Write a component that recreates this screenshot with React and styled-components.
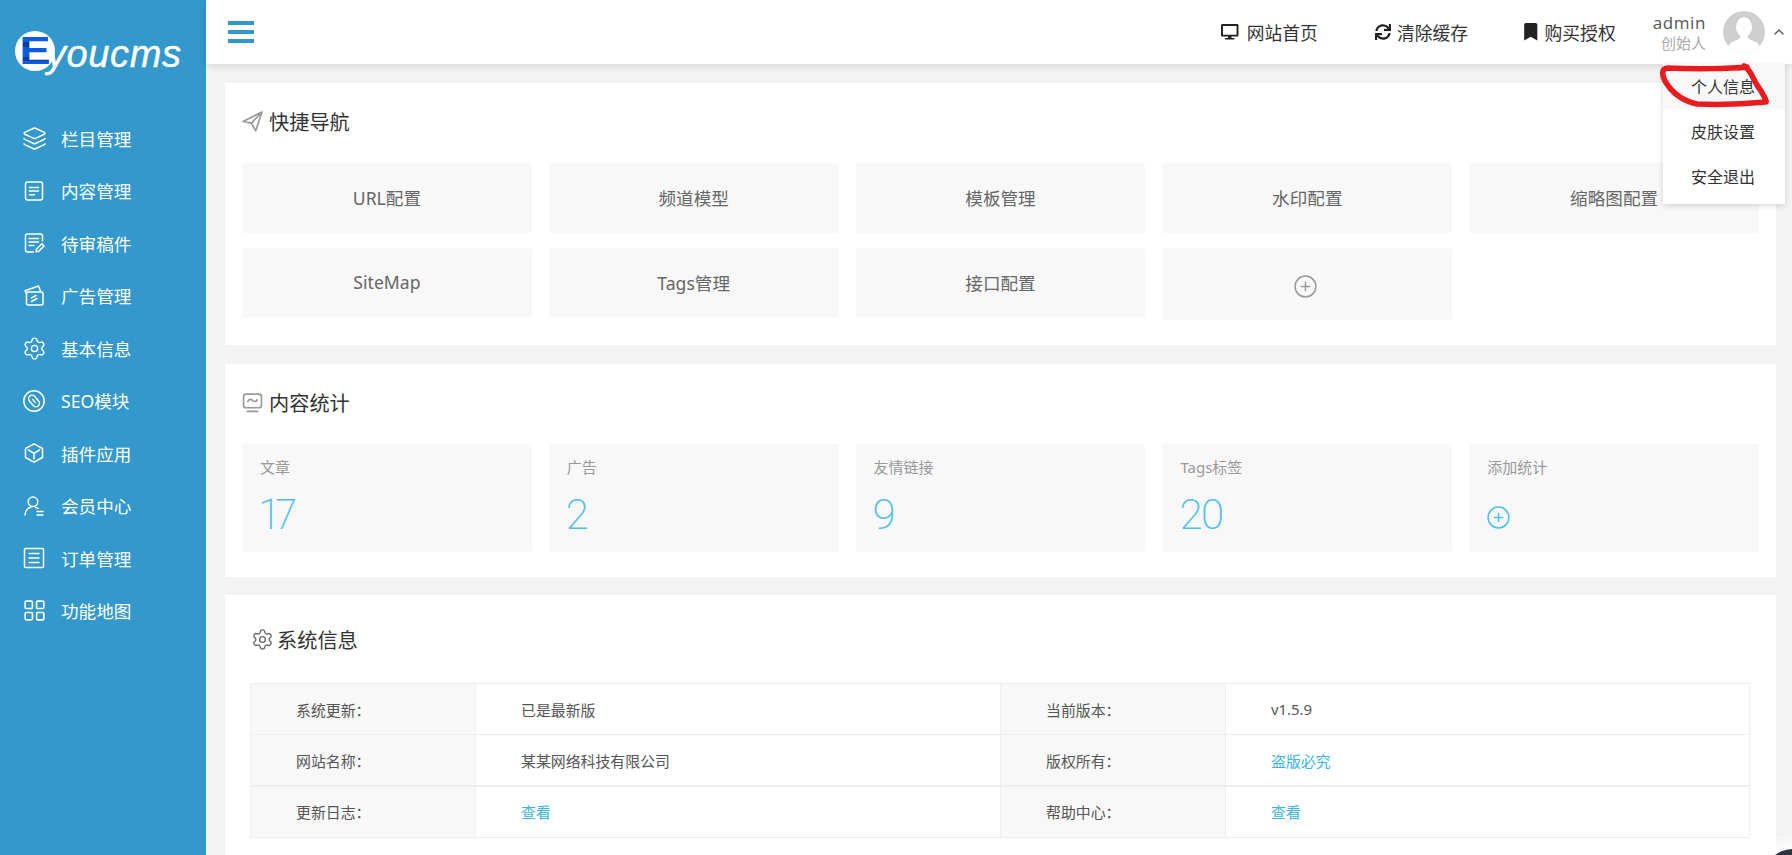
import React from 'react';
import styled, { createGlobalStyle } from 'styled-components';
import { Layers, Settings, LayoutGrid, CirclePlus, ChevronUp } from 'lucide-react';
import { FaDesktop, FaSync, FaBookmark } from 'react-icons/fa';

const GlobalStyle = createGlobalStyle`
  html, body {
    margin: 0;
    padding: 0;
    height: 100%;
    overflow: hidden;
    background: #f3f3f3;
  }
  body {
    font-family: "Noto Sans", "Noto Sans CJK SC", sans-serif;
  }
  * {
    box-sizing: border-box;
  }
`;

const Page = styled.div`
  position: relative;
  display: flex;
  width: 1792px;
  height: 855px;
  overflow: hidden;
`;

const Sidebar = styled.aside`
  flex: 0 0 206px;
  background: #3398cc;
  color: #fff;
`;

const Logo = styled.div`
  display: flex;
  align-items: center;
  height: 112px;
  padding: 0 0 11px 15px;
`;

const LogoCircle = styled.div`
  display: flex;
  flex: 0 0 40px;
  align-items: center;
  justify-content: center;
  width: 40px;
  height: 40px;
  border-radius: 50%;
  background: #fff;
`;

const LogoE = styled.span`
  display: block;
  font-family: "Liberation Sans", sans-serif;
  font-size: 39px;
  font-weight: 700;
  line-height: 1;
  color: transparent;
  background: linear-gradient(#0a5ce6 0 28%, #06409f 28% 40%, #0a5ce6 40% 66%, #06409f 66% 78%, #0a5ce6 78%);
  -webkit-background-clip: text;
  background-clip: text;
  transform: scaleX(1.2);
`;

const LogoText = styled.span`
  margin: 6px 0 0 -8px;
  font-family: "Liberation Sans", sans-serif;
  font-size: 38px;
  font-style: italic;
  line-height: 1;
  letter-spacing: 0.6px;
  -webkit-text-stroke: 0.4px #fff;
`;

const NavItem = styled.a`
  display: flex;
  align-items: center;
  gap: 16px;
  height: 52.5px;
  padding-left: 23px;
  font-size: 17.6px;
  color: #fff;
`;

const IconSlot = styled.span`
  display: flex;
  flex: 0 0 22px;
  align-items: center;
  justify-content: center;
  width: 22px;
  svg {
    flex-shrink: 0;
  }
`;

const NavIcon = styled.svg`
  flex: 0 0 22px;
  width: 22px;
  height: 22px;
  fill: none;
  stroke: currentColor;
  stroke-width: 1.5;
  stroke-linecap: round;
  stroke-linejoin: round;
`;

const Main = styled.div`
  flex: 1;
  min-width: 0;
`;

const Topbar = styled.header`
  position: relative;
  z-index: 2;
  display: flex;
  align-items: center;
  justify-content: space-between;
  height: 64px;
  padding: 0 5px 0 22px;
  background: #fff;
  box-shadow: 0 2px 8px rgba(0, 0, 0, 0.12);
`;

const Burger = styled.div`
  display: flex;
  flex-direction: column;
  gap: 5px;
  width: 26px;
  span {
    height: 4px;
    background: #3398cc;
  }
`;

const TopRight = styled.div`
  display: flex;
  align-items: center;
`;

const TopLink = styled.a`
  display: flex;
  align-items: center;
  gap: ${(p) => p.$gap}px;
  margin-right: ${(p) => p.$space}px;
  font-size: 17.8px;
  color: #333;
  svg {
    color: #222;
  }
`;

const UserName = styled.div`
  margin-right: 17px;
  text-align: right;
`;

const Admin = styled.div`
  font-family: "Open Sans", sans-serif;
  font-size: 17px;
  line-height: 22px;
  letter-spacing: 0.6px;
  color: #555;
`;

const Role = styled.div`
  font-size: 15px;
  line-height: 18px;
  color: #aaa;
`;

const Avatar = styled.svg`
  flex: 0 0 42px;
  width: 42px;
  height: 42px;
  margin-right: 6px;
`;

const Dropdown = styled.ul`
  position: absolute;
  top: 64px;
  right: 7px;
  width: 122px;
  margin: 0;
  padding: 0;
  list-style: none;
  background: #fff;
  box-shadow: 0 2px 6px rgba(0, 0, 0, 0.15);
`;

const DropItem = styled.li`
  height: ${(p) => (p.$last ? 50 : 45)}px;
  padding: 11px 0 0 28px;
  font-size: 16px;
  line-height: 24px;
  color: #333;
  background: ${(p) => (p.$first ? '#f8f8f8' : '#fff')};
`;

const Marker = styled.svg`
  position: absolute;
  top: 55px;
  left: 1650px;
  z-index: 3;
  width: 142px;
  height: 70px;
  fill: none;
  stroke: #e81c1f;
  stroke-width: 5.5;
  stroke-linecap: round;
  stroke-linejoin: round;
`;

const CornerBadge = styled.div`
  position: absolute;
  top: 849px;
  left: 1763px;
  z-index: 3;
  width: 90px;
  height: 60px;
  border-radius: 30px 0 0 0;
  background: #2d3340;
  box-shadow: 0 0 14px 8px rgba(255, 255, 255, 0.9);
`;

const Content = styled.main`
  display: flex;
  flex-direction: column;
  gap: 18.5px;
  padding: 19px 16px 0 19px;
`;

const Card = styled.section`
  padding: 0 17px 25px;
  background: #fff;
`;

const CardHead = styled.h2`
  display: flex;
  align-items: center;
  gap: 6px;
  height: 80px;
  margin: 0;
  padding-bottom: 3px;
  font-size: 20.2px;
  font-weight: 400;
  color: #333;
  svg {
    flex: 0 0 21px;
    width: 21px;
    height: 21px;
    fill: none;
    stroke: #999;
    stroke-width: 1.6;
    stroke-linecap: round;
    stroke-linejoin: round;
  }
`;

const TileGrid = styled.div`
  display: grid;
  grid-template-columns: repeat(5, 1fr);
  gap: 15px 17px;
  align-items: start;
`;

const Tile = styled.a`
  display: flex;
  align-items: center;
  justify-content: center;
  height: 70px;
  padding-bottom: 2px;
  border-radius: 3px;
  font-size: 17.6px;
  color: #666;
  background: #f8f8f8;
`;

const AddTile = styled(Tile)`
  height: 72px;
  padding: 4px 4px 0 0;
`;

const StatTile = styled.div`
  height: 108px;
  padding: 11px 18px 0;
  border-radius: 3px;
  background: #f8f8f8;
`;

const StatLabel = styled.div`
  font-size: 15px;
  line-height: 24px;
  color: #999;
`;

const StatValue = styled.div`
  margin: 11px 0 0 -1px;
  font-family: Roboto, sans-serif;
  font-size: 42px;
  font-weight: 200;
  line-height: 50px;
  letter-spacing: -2px;
  font-variant-numeric: proportional-nums;
  color: #4fc0ea;
`;

const StatAdd = styled.div`
  display: flex;
  align-items: center;
  height: 50px;
  margin: 8px 0 0 -1px;
  padding-top: 12px;
  color: #4fc0ea;
`;

const InfoCard = styled(Card)`
  padding: 0 26px 30px 25px;
`;

const InfoHead = styled(CardHead)`
  height: 88px;
  gap: 3px;
  padding: 1px 0 0 1px;
  svg {
    flex-basis: 23px;
    width: 23px;
    height: 23px;
    stroke: #666;
    stroke-width: 1.4;
  }
`;

const InfoTable = styled.table`
  width: 100%;
  table-layout: fixed;
  border-collapse: collapse;
  font-size: 14.9px;
  color: #555;
`;

const Row = styled.tr`
  height: 51.3px;
  ${(p) => p.$thick && 'border-top: 2px solid #eeeeee;'}
`;

const LabelCell = styled.td`
  padding: 0 0 0 45px;
  border: 1px solid #eeeeee;
  background: #f8f8f8;
`;

const ValueCell = styled.td`
  padding: 0 0 0 45px;
  border: 1px solid #eeeeee;
`;

const TableLink = styled.a`
  color: #3bb4e8;
`;

const navItems = [
  {
    label: '内容管理',
    icon: <><rect x="2.500" y="2" width="17" height="18" rx="2" /><path d="M6.500 7.500h9M6.500 11h9M6.500 14.800h5" /></>,
  },
  {
    label: '待审稿件',
    icon: <><path d="M19.500 9V4a2 2 0 0 0-2-2h-13a2 2 0 0 0-2 2v14a2 2 0 0 0 2 2h6" /><path d="M6 6.500h9.500M6 10h9.500M6 13.500h5" /><path d="m13 19.800.6-2.800 5.300-5.300 2.200 2.200-5.300 5.300z" /></>,
  },
  {
    label: '广告管理',
    icon: <><path d="M3.500 9 2 5.800 15.500 1l2 5" /><rect x="3.500" y="7" width="16.500" height="13" rx="1.500" /><path d="m8.500 13 4.500-2.500M8.500 16.500l5.500-3" /></>,
  },
];

const moreNavItems = [
  {
    label: 'SEO模块',
    icon: <><circle cx="11" cy="11" r="10.200" /><rect x="7.500" y="4.500" width="7" height="13" rx="3.500" transform="rotate(-40 11 11)" /><path d="m9.800 9.600 2.400 2.800" /></>,
  },
  {
    label: '插件应用',
    icon: <><path d="M11 1.800 19.500 6.500v9L11 20.200 2.500 15.500v-9z" /><path d="M5.500 8 11 11.300 16.500 8M11 11.300V17" /></>,
  },
  {
    label: '会员中心',
    icon: <><circle cx="10" cy="6.800" r="4.800" /><path d="M2 20c.3-4.300 2.600-7 6-8M12.500 12.400c1 .2 1.800.5 2.500 1" /><path d="M14 16.500h6M14 20h6" /></>,
  },
  {
    label: '订单管理',
    icon: <><rect x="1.500" y="1.500" width="19" height="19" rx="1" /><path d="M6 6.500h10M6 11h10M6 15.500h10" /></>,
  },
];

const quickLinks = ['URL配置', '频道模型', '模板管理', '水印配置', '缩略图配置', 'SiteMap', 'Tags管理', '接口配置'];

const stats = [
  { label: '文章', value: 17 },
  { label: '广告', value: 2 },
  { label: '友情链接', value: 9 },
  { label: 'Tags标签', value: 20 },
];

const App = () => {
  return (
    <Page>
      <GlobalStyle />
      <Sidebar>
        <Logo>
          <LogoCircle>
            <LogoE>E</LogoE>
          </LogoCircle>
          <LogoText>youcms</LogoText>
        </Logo>
        <nav>
          <NavItem>
            <IconSlot>
              <Layers size={25} strokeWidth={1.4} />
            </IconSlot>
            栏目管理
          </NavItem>
          {navItems.map((item) => (
            <NavItem key={item.label}>
              <NavIcon viewBox="0 0 22 22">{item.icon}</NavIcon>
              {item.label}
            </NavItem>
          ))}
          <NavItem>
            <IconSlot>
              <Settings size={25} strokeWidth={1.3} />
            </IconSlot>
            基本信息
          </NavItem>
          {moreNavItems.map((item) => (
            <NavItem key={item.label}>
              <NavIcon viewBox="0 0 22 22">{item.icon}</NavIcon>
              {item.label}
            </NavItem>
          ))}
          <NavItem>
            <IconSlot>
              <LayoutGrid size={25} strokeWidth={1.5} />
            </IconSlot>
            功能地图
          </NavItem>
        </nav>
      </Sidebar>

      <Main>
        <Topbar>
          <Burger>
            <span />
            <span />
            <span />
          </Burger>
          <TopRight>
            <TopLink $gap={8} $space={57}>
              <FaDesktop size={17.5} />
              网站首页
            </TopLink>
            <TopLink $gap={6} $space={54}>
              <FaSync size={16} />
              清除缓存
            </TopLink>
            <TopLink $gap={5} $space={37}>
              <FaBookmark size={17.5} />
              购买授权
            </TopLink>
            <UserName>
              <Admin>admin</Admin>
              <Role>创始人</Role>
            </UserName>
            <Avatar viewBox="0 0 42 42">
              <defs>
                <clipPath id="avatar-clip">
                  <circle cx="21" cy="21" r="21" />
                </clipPath>
              </defs>
              <circle cx="21" cy="21" r="21" fill="#cfcfcf" />
              <g clipPath="url(#avatar-clip)" fill="#fff">
                <ellipse cx="21" cy="16" rx="8" ry="10" />
                <path d="M17 24v3c-1 2-9 3-11 7-1 2-1 8-1 8h32s0-6-1-8c-2-4-10-5-11-7v-3z" />
              </g>
            </Avatar>
            <ChevronUp size={16} color="#555" />
          </TopRight>
          <Dropdown>
            <DropItem $first>个人信息</DropItem>
            <DropItem>皮肤设置</DropItem>
            <DropItem $last>安全退出</DropItem>
          </Dropdown>
        </Topbar>

        <Content>
          <Card>
            <CardHead>
              <svg viewBox="0 0 20 20">
                <path d="M19 1 1 10l8 1.500L13 19zM19 1 9 11.500" />
              </svg>
              快捷导航
            </CardHead>
            <TileGrid>
              {quickLinks.map((name) => (
                <Tile key={name}>{name}</Tile>
              ))}
              <AddTile>
                <CirclePlus size={25} strokeWidth={1.4} color="#999" />
              </AddTile>
            </TileGrid>
          </Card>

          <Card>
            <CardHead>
              <svg viewBox="0 0 20 20">
                <rect x="1.500" y="2" width="17" height="13" rx="2.500" />
                <path d="M5.500 9c1.500-2.500 3-2.500 4.500-1s3 1.500 4.500-.5M5 18.500h10" />
              </svg>
              内容统计
            </CardHead>
            <TileGrid>
              {stats.map((stat) => (
                <StatTile key={stat.label}>
                  <StatLabel>{stat.label}</StatLabel>
                  <StatValue>{stat.value}</StatValue>
                </StatTile>
              ))}
              <StatTile>
                <StatLabel>添加统计</StatLabel>
                <StatAdd>
                  <CirclePlus size={25} strokeWidth={1.4} />
                </StatAdd>
              </StatTile>
            </TileGrid>
          </Card>

          <InfoCard>
            <InfoHead>
              <Settings strokeWidth={1.4} />
              系统信息
            </InfoHead>
            <InfoTable>
              <colgroup>
                <col width="225" />
                <col width="525" />
                <col width="225" />
                <col />
              </colgroup>
              <tbody>
                <Row>
                  <LabelCell>系统更新：</LabelCell>
                  <ValueCell>已是最新版</ValueCell>
                  <LabelCell>当前版本：</LabelCell>
                  <ValueCell>v1.5.9</ValueCell>
                </Row>
                <Row>
                  <LabelCell>网站名称：</LabelCell>
                  <ValueCell>某某网络科技有限公司</ValueCell>
                  <LabelCell>版权所有：</LabelCell>
                  <ValueCell>
                    <TableLink>盗版必究</TableLink>
                  </ValueCell>
                </Row>
                <Row $thick>
                  <LabelCell>更新日志：</LabelCell>
                  <ValueCell>
                    <TableLink>查看</TableLink>
                  </ValueCell>
                  <LabelCell>帮助中心：</LabelCell>
                  <ValueCell>
                    <TableLink>查看</TableLink>
                  </ValueCell>
                </Row>
              </tbody>
            </InfoTable>
          </InfoCard>
        </Content>
      </Main>

      <Marker viewBox="0 0 142 70">
        <path d="M97 12C80 14 40 14 18 13 11 13 12 20 15 26 22 38 33 46 47 49 70 50 95 49 116 47 117 47 113 38 107 30 102 22 101 15 94 11" />
      </Marker>
      <CornerBadge />
    </Page>
  );
};

export default App;
